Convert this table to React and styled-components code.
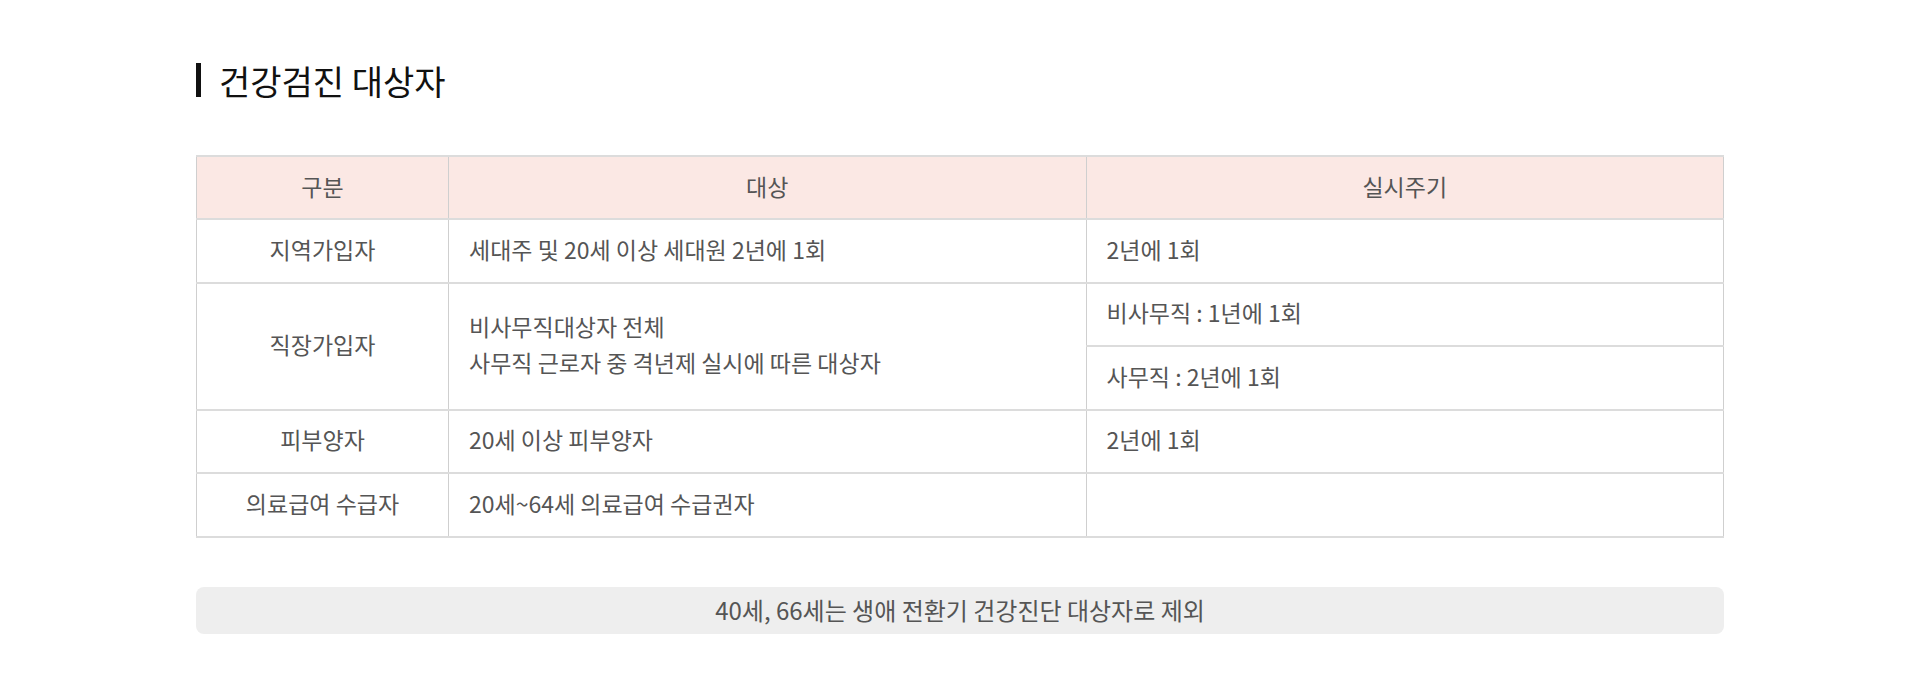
import styled, { createGlobalStyle } from "styled-components";

const GlobalStyle = createGlobalStyle`
  body {
    margin: 0;
    background: #fff;
    font-family: "Noto Sans CJK KR", "Noto Sans", sans-serif;
  }
`;

const Page = styled.div`
  width: 1528px;
  margin: 0 auto;
  padding-top: 57px;
`;

const Title = styled.h2`
  display: flex;
  align-items: center;
  margin: 0;
  height: 46px;
  font-size: 34px;
  font-weight: 400;
  color: #111;

  &:before {
    content: "";
    width: 5px;
    height: 34px;
    background: #111;
    margin-right: 18px;
  }
`;

const Table = styled.table`
  width: 100%;
  margin-top: 52px;
  border-collapse: collapse;
  table-layout: fixed;
  border-top: 2px solid #dcdcdc;
  border-left: 1px solid #cfcfcf;
  border-right: 1px solid #cfcfcf;
`;

const Th = styled.th`
  box-sizing: border-box;
  height: 63px;
  padding: 0 0 4px;
  background: #fbe8e4;
  color: #555;
  font-size: 23px;
  font-weight: 400;
  border-bottom: 2px solid #dcdcdc;
  border-right: 1px solid #cfcfcf;
`;

const Td = styled.td`
  box-sizing: border-box;
  height: 63.5px;
  padding: 0 20px 4px;
  color: #555;
  font-size: 23px;
  line-height: 36px;
  text-align: ${(p) => (p.$center ? "center" : "left")};
  border-bottom: 2px solid #dcdcdc;
  border-right: 1px solid #cfcfcf;
  vertical-align: middle;
`;

const Note = styled.div`
  margin-top: 49px;
  height: 47px;
  padding-bottom: 2px;
  box-sizing: border-box;
  display: flex;
  align-items: center;
  justify-content: center;
  background: #eeeeee;
  border-radius: 8px;
  color: #555;
  font-size: 24px;
`;

const rows = [
  { kind: "지역가입자", target: ["세대주 및 20세 이상 세대원 2년에 1회"], cycle: ["2년에 1회"] },
  {
    kind: "직장가입자",
    target: ["비사무직대상자 전체", "사무직 근로자 중 격년제 실시에 따른 대상자"],
    cycle: ["비사무직 : 1년에 1회", "사무직 : 2년에 1회"],
  },
  { kind: "피부양자", target: ["20세 이상 피부양자"], cycle: ["2년에 1회"] },
  { kind: "의료급여 수급자", target: ["20세~64세 의료급여 수급권자"], cycle: [""] },
];

export default function App() {
  return (
    <>
      <GlobalStyle />
      <Page>
        <Title>건강검진 대상자</Title>
        <Table>
          <colgroup>
            <col style={{ width: 252 }} />
            <col />
            <col />
          </colgroup>
          <thead>
            <tr>
              <Th>구분</Th>
              <Th>대상</Th>
              <Th>실시주기</Th>
            </tr>
          </thead>
          <tbody>
            {rows.map((r) =>
              r.cycle.map((c, i) => (
                <tr key={r.kind + i}>
                  {i === 0 && (
                    <>
                      <Td $center rowSpan={r.cycle.length}>
                        {r.kind}
                      </Td>
                      <Td rowSpan={r.cycle.length}>
                        {r.target.map((t) => (
                          <div key={t}>{t}</div>
                        ))}
                      </Td>
                    </>
                  )}
                  <Td>{c}</Td>
                </tr>
              ))
            )}
          </tbody>
        </Table>
        <Note>40세, 66세는 생애 전환기 건강진단 대상자로 제외</Note>
      </Page>
    </>
  );
}
